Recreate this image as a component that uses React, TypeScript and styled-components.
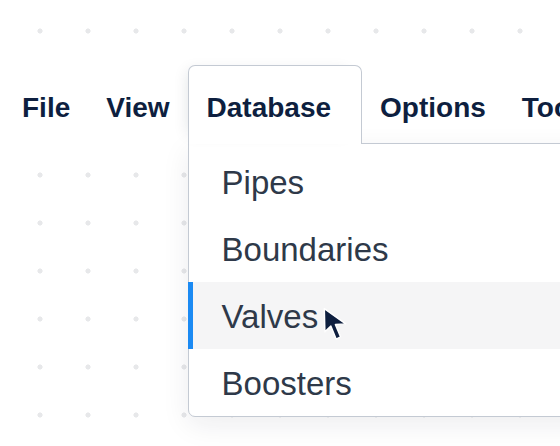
import { createGlobalStyle } from 'styled-components';
import styled from 'styled-components';

const GlobalStyle = createGlobalStyle`
  html, body {
    margin: 0;
    padding: 0;
    width: 100%;
    height: 100%;
    overflow: hidden;
  }
  body {
    background-color: #ffffff;
    background-image: radial-gradient(circle, #e7e8ea 2.2px, transparent 2.9px);
    background-size: 48px 48px;
    background-position: 16px 7px;
    font-family: 'Liberation Sans', Arial, sans-serif;
  }
`;

const Page = styled.div`
  width: 560px;
  height: 446px;
  padding-top: 50px;
  box-sizing: border-box;
`;

const MenuBar = styled.nav`
  display: flex;
  align-items: flex-end;
  height: 94px;
  padding-left: 4px;
  background: #ffffff;
  white-space: nowrap;
`;

const MenuItem = styled.div`
  display: flex;
  align-items: center;
  height: 79px;
  padding: 6px 18px 0;
  box-sizing: border-box;
  font-size: 28px;
  font-weight: 700;
  color: #0e1f3f;
`;

const TabWrap = styled.div`
  position: relative;
`;

const Tab = styled(MenuItem)`
  position: relative;
  z-index: 2;
  padding: 6px 30px 0 18px;
  background: #ffffff;
  border: 1px solid #c4cad3;
  border-bottom: none;
  border-radius: 7px 7px 0 0;
  box-shadow: -8px -2px 14px -8px rgba(20, 30, 50, 0.12);
`;

const Dropdown = styled.div`
  position: absolute;
  z-index: 1;
  left: 0;
  top: calc(100% - 1px);
  width: 420px;
  padding-top: 4px;
  background: #ffffff;
  border: 1px solid #c4cad3;
  border-radius: 0 0 0 7px;
  box-shadow: 0 8px 28px rgba(20, 30, 50, 0.08);
`;

const Option = styled.div<{ $active?: boolean }>`
  display: flex;
  align-items: center;
  height: 67px;
  margin-left: -1px;
  padding: 3px 0 0 29px;
  box-sizing: border-box;
  border-left: 5px solid ${(p) => (p.$active ? '#1b8af3' : 'transparent')};
  background: ${(p) => (p.$active ? '#f5f5f6' : 'transparent')};
  font-size: 33px;
  font-weight: 400;
  color: #2e3949;
`;

const Cursor = () => (
  <svg width="26" height="36" viewBox="0 0 23 32" style={{ marginLeft: 4, marginTop: 16 }}>
    <path
      d="M2 1.5 L2.5 22 L7.8 17 L12.5 28.5 L16.5 26.6 L11.8 15.6 L21 15 Z"
      fill="#0e1f3f"
      stroke="#ffffff"
      strokeWidth="1.3"
      strokeLinejoin="round"
    />
  </svg>
);

const options = ['Pipes', 'Boundaries', 'Valves', 'Boosters'];

export default function App() {
  return (
    <>
      <GlobalStyle />
      <Page>
        <MenuBar>
          <MenuItem>File</MenuItem>
          <MenuItem>View</MenuItem>
          <TabWrap>
            <Tab>Database</Tab>
            <Dropdown>
              {options.map((o) => (
                <Option key={o} $active={o === 'Valves'}>
                  {o}
                  {o === 'Valves' && <Cursor />}
                </Option>
              ))}
            </Dropdown>
          </TabWrap>
          <MenuItem>Options</MenuItem>
          <MenuItem>Tools</MenuItem>
        </MenuBar>
      </Page>
    </>
  );
}
